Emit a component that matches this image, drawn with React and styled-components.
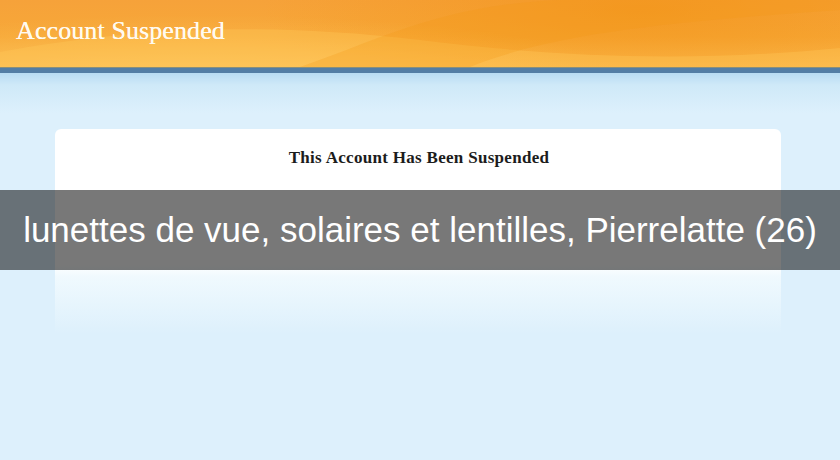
import React from 'react';
import styled, { createGlobalStyle } from 'styled-components';

const GlobalStyle = createGlobalStyle`
  html, body {
    margin: 0;
    padding: 0;
    background: #ddf0fc;
  }
  #root {
    min-height: 460px;
  }
`;

const Page = styled.div`
  position: relative;
  width: 100%;
  height: 460px;
  overflow: hidden;
  background: #ddf0fc;
`;

const Header = styled.header`
  position: relative;
  height: 67px;
  overflow: hidden;
  background:
    radial-gradient(ellipse 420px 60px at 200px 75px, rgba(255, 205, 100, 0.55), rgba(255, 205, 100, 0) 100%),
    radial-gradient(ellipse 380px 90px at 640px 10px, rgba(240, 140, 10, 0.45), rgba(240, 140, 10, 0) 100%),
    linear-gradient(to bottom, #f6a23a 0%, #f7a838 55%, #fbb84c 100%);
  display: flex;
  align-items: flex-start;
  padding: 0 16px;
`;

const Wave = styled.svg`
  position: absolute;
  left: 0;
  top: 0;
  width: 840px;
  height: 67px;
  pointer-events: none;
`;

const Brand = styled.h1`
  position: relative;
  margin: 16px 0 0;
  font-family: "Liberation Serif", "DejaVu Serif", serif;
  font-size: 26px;
  font-weight: normal;
  color: #fffaf0;
  letter-spacing: 0.1px;
  line-height: 30px;
  text-shadow: 0 0 0.4px #fffaf0;
`;

const Stripe = styled.div`
  height: 6px;
  background: #527da5;
  border-top: 1px solid #8a8f7a;
  box-sizing: border-box;
`;

const Content = styled.main`
  background: linear-gradient(to bottom, #b7dbf3 0, #cfe9f8 12px, #ddf0fc 40px, #ddf0fc 100%);
  height: 387px;
  padding: 56px 59px 0 55px;
  box-sizing: border-box;
`;

const Card = styled.section`
  height: 205px;
  border-radius: 6px 6px 0 0;
  background: linear-gradient(to bottom, #ffffff 0, #ffffff 66%, rgba(241, 250, 254, 0.95) 72%, rgba(221, 240, 252, 0) 100%);
  padding-top: 19px;
  box-sizing: border-box;
`;

const CardTitle = styled.h2`
  margin: 0;
  text-align: center;
  font-family: "Liberation Serif", "DejaVu Serif", serif;
  font-size: 17px;
  font-weight: bold;
  color: #1c1c1c;
  letter-spacing: 0.3px;
  line-height: 20px;
  padding-left: 2px;
`;

const Banner = styled.div`
  position: absolute;
  left: 0;
  right: 0;
  top: 190px;
  height: 80px;
  background: rgba(0, 0, 0, 0.53);
  display: flex;
  align-items: center;
  justify-content: center;
`;

const BannerText = styled.p`
  margin: 0;
  font-family: "Liberation Sans", Arial, sans-serif;
  font-size: 35px;
  color: #ffffff;
  white-space: nowrap;
  padding-bottom: 1px;
`;

export default function App() {
  return (
    <>
      <GlobalStyle />
      <Page>
        <Header>
          <Wave viewBox="0 0 840 67" preserveAspectRatio="none">
            <path d="M0 52 C 120 30, 250 20, 420 40 C 560 58, 700 62, 840 48 L 840 67 L 0 67 Z" fill="rgba(255, 200, 90, 0.35)" />
            <path d="M300 67 C 380 40, 440 5, 560 0 L 840 0 L 840 10 C 700 20, 560 30, 470 67 Z" fill="rgba(245, 150, 20, 0.25)" />
          </Wave>
          <Brand>Account Suspended</Brand>
        </Header>
        <Stripe />
        <Content>
          <Card>
            <CardTitle>This Account Has Been Suspended</CardTitle>
          </Card>
        </Content>
        <Banner>
          <BannerText>lunettes de vue, solaires et lentilles, Pierrelatte (26)</BannerText>
        </Banner>
      </Page>
    </>
  );
}
